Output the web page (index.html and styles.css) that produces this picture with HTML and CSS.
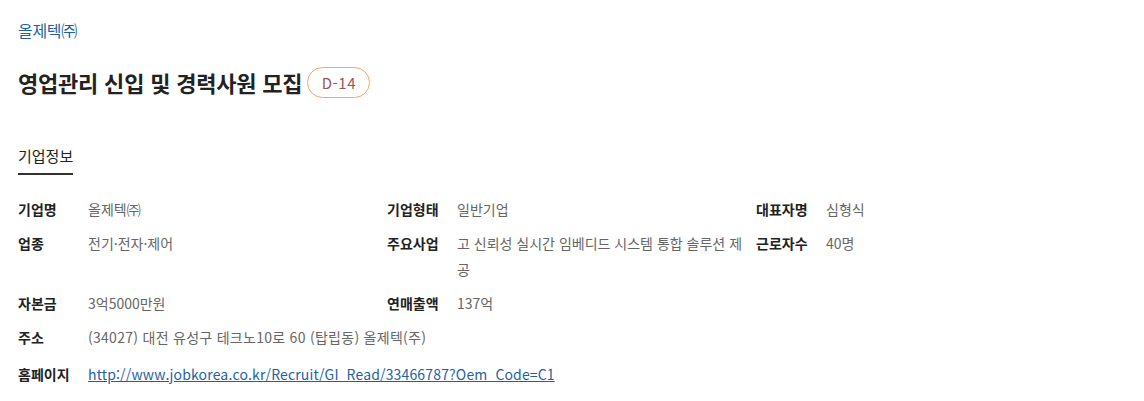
FILE: index.html
```html
<!DOCTYPE html>
<html lang="ko">
<head>
<meta charset="utf-8">
<link rel="stylesheet" href="styles.css">
</head>
<body>
<div class="page">
  <div class="company">올제텍㈜</div>
  <h1 class="title"><span>영업관리 신입 및 경력사원 모집</span><span class="badge">D-14</span></h1>
  <div class="tabs"><span class="tab">기업정보</span></div>
  <div class="info">
    <div class="cell"><span class="label">기업명</span><span class="value">올제텍㈜</span></div>
    <div class="cell"><span class="label">기업형태</span><span class="value">일반기업</span></div>
    <div class="cell"><span class="label">대표자명</span><span class="value">심형식</span></div>
    <div class="cell"><span class="label">업종</span><span class="value">전기·전자·제어</span></div>
    <div class="cell"><span class="label">주요사업</span><span class="value">고 신뢰성 실시간 임베디드 시스템 통합 솔루션 제공</span></div>
    <div class="cell"><span class="label">근로자수</span><span class="value">40명</span></div>
    <div class="cell"><span class="label">자본금</span><span class="value">3억5000만원</span></div>
    <div class="cell"><span class="label">연매출액</span><span class="value">137억</span></div>
    <div class="cell"></div>
    <div class="cell wide"><span class="label">주소</span><span class="value address">(34027) 대전 유성구 테크노10로 60 (탑립동) 올제텍(주)</span></div>
    <div class="cell wide homepage"><span class="label">홈페이지</span><span class="value"><a class="link" href="#">http://www.jobkorea.co.kr/Recruit/GI_Read/33466787?Oem_Code=C1</a></span></div>
  </div>
</div>
</body>
</html>
```
FILE: styles.css
```css
* { box-sizing: border-box; }
body {
  margin: 0;
  background: #fff;
  font-family: "Noto Sans CJK KR", "Noto Sans", sans-serif;
  color: #222;
}
.page {
  padding: 19px 18px 0 18px;
}
.company {
  font-size: 16px;
  line-height: 22px;
  color: #1f5fa8;
  letter-spacing: -0.3px;
}
.title {
  margin: 26px 0 0 0;
  display: flex;
  align-items: center;
  gap: 5px;
  font-size: 22px;
  font-weight: 700;
  line-height: 31px;
  color: #222;
  letter-spacing: -0.2px;
}
.badge {
  display: inline-flex;
  align-items: center;
  justify-content: center;
  width: 63px;
  height: 31px;
  border: 1px solid #f5a769;
  border-radius: 16px;
  font-size: 15px;
  font-weight: 400;
  color: #9c5654;
  letter-spacing: 0.5px;
}
.tabs {
  margin-top: 47px;
  display: flex;
}
.tab {
  font-size: 15px;
  line-height: 22px;
  color: #222;
  padding-bottom: 6px;
  border-bottom: 2px solid #333;
}
.info {
  margin-top: 21px;
  display: grid;
  grid-template-columns: 369px 369px 369px;
  row-gap: 8px;
}
.cell {
  display: flex;
  font-size: 14px;
  line-height: 26px;
}
.cell.wide { grid-column: 1 / 4; }
.cell.homepage { margin-top: 3px; }
.label {
  flex: 0 0 70px;
  font-weight: 700;
  color: #222;
}
.value {
  flex: 1 1 auto;
  color: #666;
  padding-right: 8px;
}
.value.address { letter-spacing: 0.28px; }
.link {
  color: #1f5fa8;
  text-decoration: underline;
  letter-spacing: 0.15px;
}
```
